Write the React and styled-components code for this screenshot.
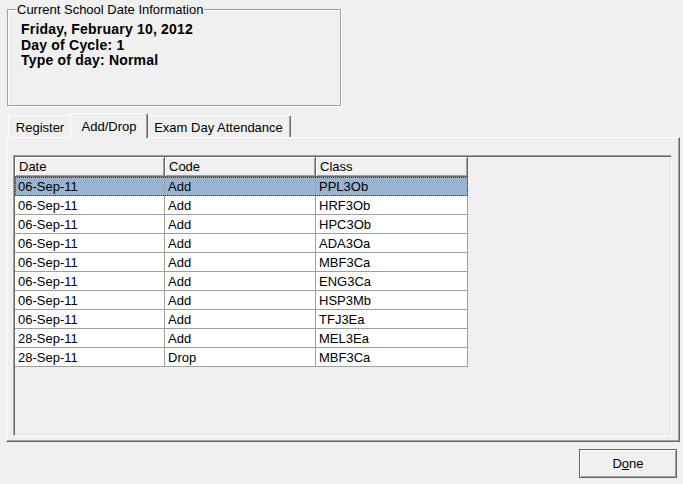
import React from 'react'
import styled, { createGlobalStyle } from 'styled-components'

const GlobalStyle = createGlobalStyle`
    html, body {
        margin: 0;
        padding: 0;
        background: #f0f0f0;
    }

    body {
        font-family: "Liberation Sans", Arial, sans-serif;
        font-size: 13px;
        color: #000;
    }
`

const rows = [
    { date: '06-Sep-11', code: 'Add', klass: 'PPL3Ob' },
    { date: '06-Sep-11', code: 'Add', klass: 'HRF3Ob' },
    { date: '06-Sep-11', code: 'Add', klass: 'HPC3Ob' },
    { date: '06-Sep-11', code: 'Add', klass: 'ADA3Oa' },
    { date: '06-Sep-11', code: 'Add', klass: 'MBF3Ca' },
    { date: '06-Sep-11', code: 'Add', klass: 'ENG3Ca' },
    { date: '06-Sep-11', code: 'Add', klass: 'HSP3Mb' },
    { date: '06-Sep-11', code: 'Add', klass: 'TFJ3Ea' },
    { date: '28-Sep-11', code: 'Add', klass: 'MEL3Ea' },
    { date: '28-Sep-11', code: 'Drop', klass: 'MBF3Ca' },
]

const tabs = [
    { label: 'Register', width: 64 },
    { label: 'Add/Drop', width: 74, active: true },
    { label: 'Exam Day Attendance', width: 145 },
]

const App = () => {
    return (
        <Window>
            <GlobalStyle />

            <GroupBox>
                <Legend>Current School Date Information</Legend>
                <Info>Friday, February 10, 2012</Info>
                <Info>Day of Cycle: 1</Info>
                <Info>Type of day: Normal</Info>
            </GroupBox>

            <TabStrip>
                {tabs.map(tab => (
                    <Tab key={tab.label} width={tab.width} active={tab.active}>
                        {tab.label}
                    </Tab>
                ))}
            </TabStrip>

            <Panel>
                <ListView>
                    <HeaderRow>
                        <HeaderCell>Date</HeaderCell>
                        <HeaderCell>Code</HeaderCell>
                        <HeaderCell>Class</HeaderCell>
                    </HeaderRow>
                    {rows.map((row, i) => (
                        <Row key={i} selected={i === 0}>
                            <Cell>{row.date}</Cell>
                            <Cell>{row.code}</Cell>
                            <Cell>{row.klass}</Cell>
                        </Row>
                    ))}
                </ListView>
            </Panel>

            <ButtonBar>
                <Button>D<u>o</u>ne</Button>
            </ButtonBar>
        </Window>
    )
}

const Window = styled.div`
    width: 683px;
    height: 484px;
    display: flex;
    flex-direction: column;
    background: #f0f0f0;
    overflow: hidden;
`

const GroupBox = styled.div`
    position: relative;
    box-sizing: border-box;
    width: 334px;
    height: 97px;
    margin: 9px 0 0 7px;
    padding: 12px 0 0 13px;
    border: 1px solid #a0a0a0;
    box-shadow: inset 1px 1px 0 #fff, 1px 1px 0 #fff;
`

const Legend = styled.span`
    position: absolute;
    top: -8px;
    left: 8px;
    padding: 0 1px;
    line-height: 15px;
    background: #f0f0f0;
`

const Info = styled.div`
    font-weight: bold;
    font-size: 14px;
    letter-spacing: 0.2px;
    line-height: 15.5px;
`

const TabStrip = styled.div`
    display: flex;
    align-items: flex-end;
    height: 24px;
    margin: 7px 0 0 8px;
    position: relative;
    z-index: 1;
`

const Tab = styled.div`
    box-sizing: border-box;
    width: ${({ width, active }) => (active ? width + 4 : width)}px;
    height: ${({ active }) => (active ? 25 : 22)}px;
    margin: ${({ active }) => (active ? '0 -2px -1px' : '0')};
    padding-top: ${({ active }) => (active ? 5 : 4)}px;
    text-align: center;
    line-height: 15px;
    white-space: nowrap;
    background: #f0f0f0;
    border-top: 1px solid #fff;
    border-left: 1px solid #fff;
    border-right: 1px solid #696969;
    box-shadow: inset -1px 0 0 #a0a0a0;
    border-radius: 2px 2px 0 0;
    position: relative;
    z-index: ${({ active }) => (active ? 2 : 1)};
`

const Panel = styled.div`
    box-sizing: border-box;
    width: 674px;
    height: 305px;
    margin-left: 6px;
    padding: 17px 7px 0 6px;
    border-top: 1px solid #fff;
    border-left: 1px solid #fff;
    border-right: 1px solid #696969;
    border-bottom: 1px solid #696969;
    box-shadow: inset -1px -1px 0 #a0a0a0;
`

const ListView = styled.div`
    box-sizing: border-box;
    height: 281px;
    padding: 1px;
    border-top: 1px solid #a0a0a0;
    border-left: 1px solid #a0a0a0;
    border-right: 1px solid #fff;
    border-bottom: 1px solid #fff;
    box-shadow: inset 1px 1px 0 #696969, inset -1px -1px 0 #e3e3e3;
    background: #f0f0f0;
`

const HeaderRow = styled.div`
    display: grid;
    grid-template-columns: 150px 151px 152px;
    width: 453px;
    height: 20px;
`

const HeaderCell = styled.div`
    box-sizing: border-box;
    height: 20px;
    padding: 1px 0 0 4px;
    line-height: 18px;
    background: #f0f0f0;
    border-right: 1px solid #696969;
    border-bottom: 1px solid #696969;
    box-shadow: inset 1px 1px 0 #fff, inset -1px -1px 0 #a0a0a0;
`

const Row = styled.div`
    display: grid;
    grid-template-columns: 150px 151px 152px;
    width: 453px;
    height: 19px;
    background: ${({ selected }) => (selected ? '#99b4d1' : '#fff')};
    outline: ${({ selected }) => (selected ? '1px dotted #333' : 'none')};
    outline-offset: -1px;
`

const Cell = styled.div`
    box-sizing: border-box;
    height: 19px;
    padding: 2px 0 0 3px;
    line-height: 16px;
    overflow: hidden;
    border-right: 1px solid #a0a0a0;
    border-bottom: 1px solid #a0a0a0;
`

const ButtonBar = styled.div`
    display: flex;
    justify-content: flex-end;
    margin-top: 7px;
    padding-right: 6px;
`

const Button = styled.button`
    box-sizing: border-box;
    width: 98px;
    height: 29px;
    padding: 0;
    font-family: "Liberation Sans", Arial, sans-serif;
    font-size: 13px;
    color: #000;
    background: #f0f0f0;
    border: 1px solid #646464;
    box-shadow: inset 1px 1px 0 #fff, inset -1px -1px 0 #a0a0a0;
    border-radius: 0;
    cursor: pointer;
`

export default App
